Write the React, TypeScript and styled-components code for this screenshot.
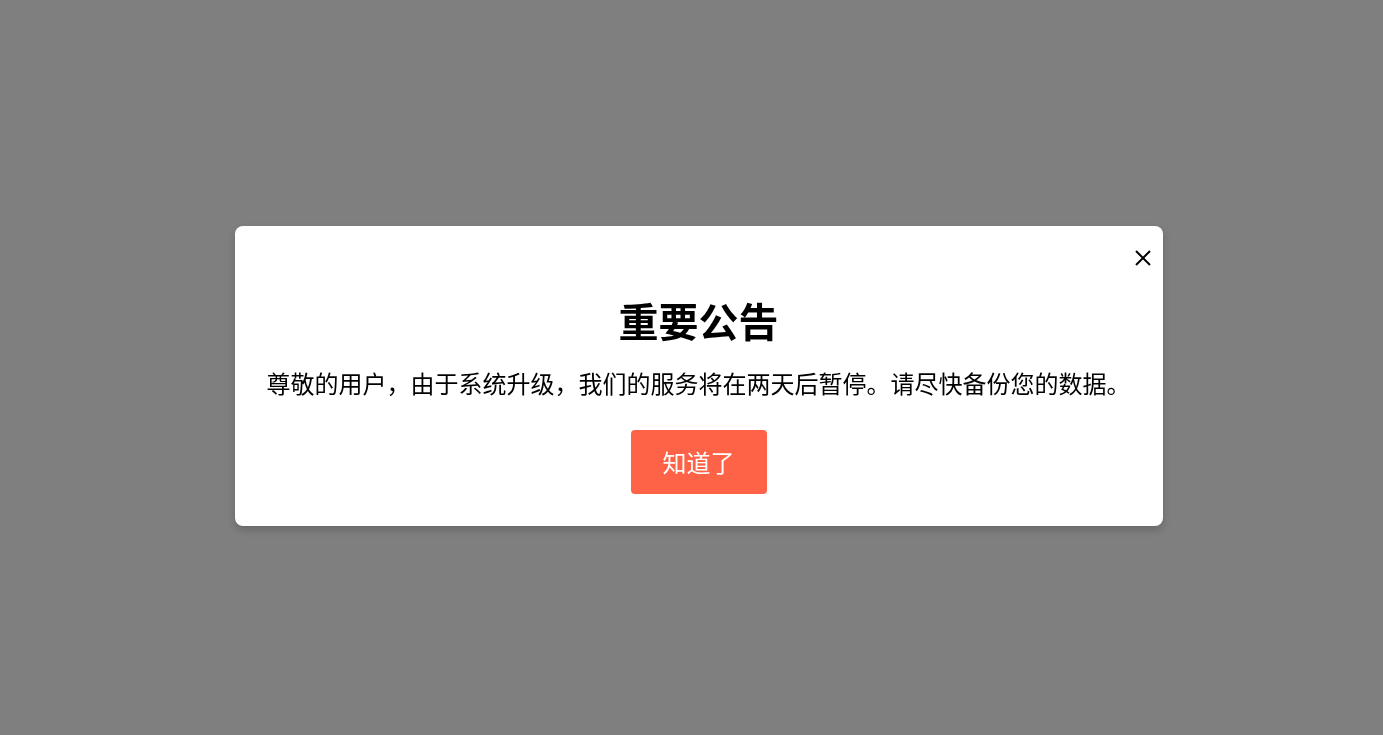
import styled, { createGlobalStyle } from 'styled-components'

const GlobalStyle = createGlobalStyle`
  html, body {
    margin: 0;
    padding: 0;
    background: #ffffff;
    font-family: "Noto Sans CJK SC", "Noto Sans", sans-serif;
  }
`

const Overlay = styled.div`
  position: fixed;
  inset: 0;
  background-color: rgba(0, 0, 0, 0.5);
  display: flex;
  align-items: center;
  justify-content: center;
  padding: 17px 0 0 14px;
  box-sizing: border-box;
`

const Modal = styled.div`
  position: relative;
  width: 928px;
  box-sizing: border-box;
  padding: 32px;
  background-color: #ffffff;
  border-radius: 8px;
  box-shadow: 0 4px 10px rgba(0, 0, 0, 0.2);
  display: flex;
  flex-direction: column;
  align-items: center;
  text-align: center;
`

const CloseButton = styled.button`
  position: absolute;
  top: 24px;
  right: 12px;
  width: 16px;
  height: 16px;
  padding: 0;
  border: 0;
  background: none;
  cursor: pointer;
  display: flex;
  align-items: center;
  justify-content: center;
`

const Title = styled.h2`
  margin: 33px 0 16px;
  font-size: 40px;
  line-height: 58px;
  font-weight: 700;
  color: #000000;
`

const Message = styled.p`
  margin: 0 0 30px;
  font-size: 24px;
  line-height: 35px;
  color: #000000;
`

const ConfirmButton = styled.button`
  background-color: tomato;
  color: #ffffff;
  border: 0;
  border-radius: 4px;
  padding: 16px 32px;
  font-family: inherit;
  font-size: 24px;
  line-height: 32px;
  cursor: pointer;
`

export default function App() {
  return (
    <>
      <GlobalStyle />
      <Overlay>
        <Modal>
          <CloseButton aria-label="关闭">
            <svg width="16" height="16" viewBox="0 0 16 16">
              <path d="M1 1 L15 15 M15 1 L1 15" stroke="#000" strokeWidth="2" />
            </svg>
          </CloseButton>
          <Title>重要公告</Title>
          <Message>
            尊敬的用户，由于系统升级，我们的服务将在两天后暂停。请尽快备份您的数据。
          </Message>
          <ConfirmButton>知道了</ConfirmButton>
        </Modal>
      </Overlay>
    </>
  )
}
